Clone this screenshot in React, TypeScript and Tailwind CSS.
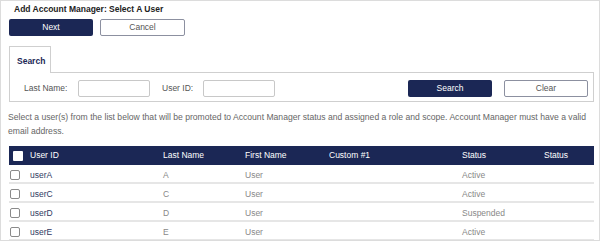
import React from 'react';

const rows = [
  { id: 'userA', last: 'A', first: 'User', status: 'Active' },
  { id: 'userC', last: 'C', first: 'User', status: 'Active' },
  { id: 'userD', last: 'D', first: 'User', status: 'Suspended' },
  { id: 'userE', last: 'E', first: 'User', status: 'Active' },
];

const Box: React.FC<{ white?: boolean }> = ({ white }) => (
  <span
    className={
      white
        ? 'block w-[10px] h-[10px] bg-white rounded-[1px]'
        : 'block w-[10px] h-[10px] bg-white border border-[#8a8a8a] rounded-[2px]'
    }
  />
);

export default function App() {
  return (
    <div
      className="w-[600px] h-[241px] border border-[#dcdcdc] bg-white overflow-hidden"
      style={{ fontFamily: '"Liberation Sans", Arial, sans-serif' }}
    >
      <div className="pl-[13px] pt-[3px] h-[18px] text-[8.5px] font-bold text-[#222] leading-[10px]">
        Add Account Manager: Select A User
      </div>

      <div className="flex gap-[7px] pl-[8px]">
        <button className="w-[84px] h-[17px] bg-[#1b2755] text-white text-[8.5px] rounded-[2px]">Next</button>
        <button className="w-[85px] h-[17px] bg-white border border-[#8c90a0] text-[#555] text-[8.5px] rounded-[2px]">
          Cancel
        </button>
      </div>

      <div className="mt-[10px] ml-[8px] w-[585px]">
        <div className="flex">
          <div className="w-[42px] h-[27px] border border-b-0 border-[#cfcfcf] bg-white -mb-px relative z-10 pl-[7px] pt-[8px] text-[8.5px] font-bold text-[#1b2755]">
            Search
          </div>
        </div>
        <div className="h-[30px] border border-[#cfcfcf] flex items-center pl-[14px] pr-[5px] pt-[2px] text-[8.5px] text-[#555]">
          <span className="w-[54px]">Last Name:</span>
          <span className="block w-[72px] h-[17px] border border-[#c8c8c8] rounded-[2px]" />
          <span className="ml-[12px] w-[41px]">User ID:</span>
          <span className="block w-[72px] h-[17px] border border-[#c8c8c8] rounded-[2px]" />
          <div className="flex-1" />
          <button className="w-[84px] h-[17px] bg-[#1b2755] text-white text-[8.5px] rounded-[2px]">Search</button>
          <button className="ml-[12px] w-[84px] h-[17px] bg-white border border-[#8c90a0] text-[#555] text-[8.5px] rounded-[2px]">
            Clear
          </button>
        </div>
      </div>

      <p className="mt-[8px] pl-[7px] pr-[2px] text-[8.6px] leading-[14px] text-[#666]">
        Select a user(s) from the list below that will be promoted to Account Manager status and assigned a role and scope. Account Manager must have a valid email address.
      </p>

      <div className="mt-[8px] ml-[8px] w-[585px] text-[8.5px]">
        <div className="h-[19px] bg-[#1b2755] text-white flex items-center">
          <span className="w-[21px] pl-[4px]">
            <Box white />
          </span>
          <span className="w-[133px]">User ID</span>
          <span className="w-[82px]">Last Name</span>
          <span className="w-[84px]">First Name</span>
          <span className="w-[133px]">Custom #1</span>
          <span className="w-[82px]">Status</span>
          <span>Status</span>
        </div>
        {rows.map((r) => (
          <div key={r.id} className="h-[19px] border-b-2 border-[#e6e6e6] flex items-center pt-[3px] text-[#888]">
            <span className="w-[21px] pl-[1px]">
              <Box />
            </span>
            <span className="w-[133px] text-[#2f3a62]">{r.id}</span>
            <span className="w-[82px]">{r.last}</span>
            <span className="w-[84px]">{r.first}</span>
            <span className="w-[133px]" />
            <span className="w-[82px]">{r.status}</span>
          </div>
        ))}
      </div>
    </div>
  );
}
